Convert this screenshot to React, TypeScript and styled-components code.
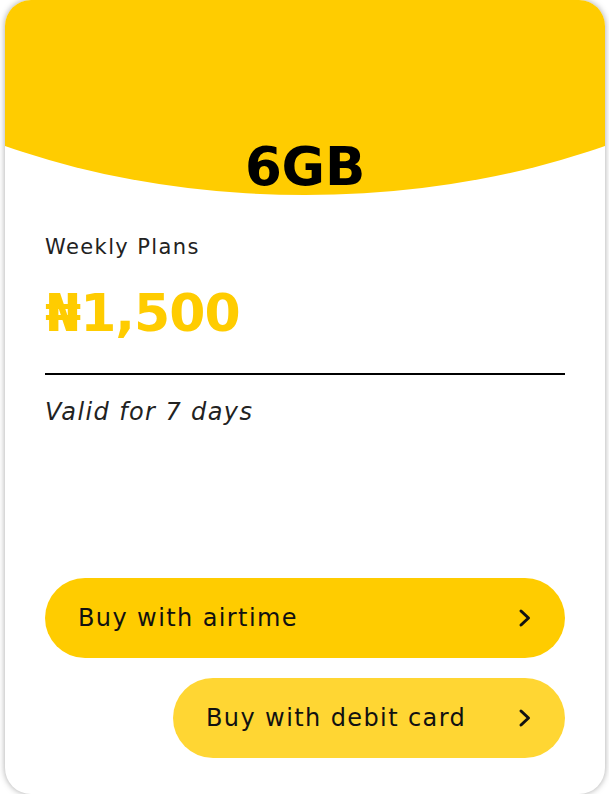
import React from "react";
import styled, { createGlobalStyle } from "styled-components";

const GlobalStyle = createGlobalStyle`
    html, body {
        margin: 0;
        padding: 0;
        background: #fff;
    }
    body {
        font-family: "DejaVu Sans", "Noto Sans", sans-serif;
        overflow: hidden;
    }
`;

const YELLOW = "#ffcc00";

interface PlanProps {
    volume: string;
    category: string;
    price: string;
    validity: string;
}

const ArrowIcon = () => (
    <svg width="14" height="20" viewBox="0 0 14 20" fill="none">
        <polyline points="3,3 10.5,10 3,17" stroke="#111" strokeWidth="3" strokeLinecap="round" strokeLinejoin="round" />
    </svg>
);

const PlanCard = ({ volume, category, price, validity }: PlanProps) => (
    <Card>
        <Header>
            <Volume>{volume}</Volume>
        </Header>
        <Body>
            <Category>{category}</Category>
            <Price>{price}</Price>
            <Divider />
            <Validity>{validity}</Validity>
            <Actions>
                <BuyButton>
                    <span>Buy with airtime</span>
                    <ArrowIcon />
                </BuyButton>
                <BuyButton light>
                    <span>Buy with debit card</span>
                    <ArrowIcon />
                </BuyButton>
            </Actions>
        </Body>
    </Card>
);

export default function App() {
    return (
        <>
            <GlobalStyle />
            <Page>
                <PlanCard volume="6GB" category="Weekly Plans" price="₦1,500" validity="Valid for 7 days" />
            </Page>
        </>
    );
}

const Page = styled.div`
    padding: 0 5px;
    height: 794px;
`;

const Card = styled.div`
    display: flex;
    flex-direction: column;
    width: 600px;
    height: 794px;
    background: #fff;
    border-radius: 26px;
    box-shadow: 0 0 6px rgba(0, 0, 0, 0.35);
    overflow: hidden;
`;

// yellow cap with a wide elliptical lower edge
const Header = styled.div`
    position: relative;
    height: 195px;
    flex-shrink: 0;
    display: flex;
    align-items: flex-end;
    justify-content: center;

    &::before {
        content: "";
        position: absolute;
        left: -50%;
        bottom: 0;
        width: 200%;
        height: 732px;
        border-radius: 50%;
        background: ${YELLOW};
    }
`;

const Volume = styled.div`
    position: relative;
    font-family: "DejaVu Sans", sans-serif;
    font-weight: 700;
    font-size: 53px;
    line-height: 64px;
    color: #000;
    margin-bottom: -4px;
    letter-spacing: -0.2px;
`;

const Body = styled.div`
    flex: 1;
    display: flex;
    flex-direction: column;
    padding: 38px 40px 36px;
`;

const Category = styled.div`
    font-size: 21px;
    line-height: 28px;
    letter-spacing: 1.4px;
    color: #222;
`;

const Price = styled.div`
    margin-top: 22px;
    font-family: "DejaVu Sans", sans-serif;
    font-weight: 700;
    font-size: 52px;
    line-height: 60px;
    color: ${YELLOW};
    letter-spacing: -1px;
`;

const Divider = styled.hr`
    margin: 30px 0 0;
    border: none;
    height: 2px;
    background: #000;
`;

const Validity = styled.div`
    margin-top: 22px;
    font-size: 24px;
    font-style: italic;
    font-weight: 300;
    line-height: 30px;
    letter-spacing: 1.4px;
    color: #222;
`;

const Actions = styled.div`
    margin-top: auto;
    display: flex;
    flex-direction: column;
    align-items: flex-end;
    gap: 20px;
`;

const BuyButton = styled.button<{ light?: boolean }>`
    display: flex;
    align-items: center;
    justify-content: space-between;
    gap: 24px;
    width: ${(p) => (p.light ? "392px" : "100%")};
    height: 80px;
    padding: 0 33px;
    border: none;
    border-radius: 40px;
    background: ${(p) => (p.light ? "#ffd633" : YELLOW)};
    font-family: "DejaVu Sans", sans-serif;
    font-size: 24px;
    letter-spacing: 1.4px;
    color: #111;
    cursor: pointer;
    text-align: left;
`;
